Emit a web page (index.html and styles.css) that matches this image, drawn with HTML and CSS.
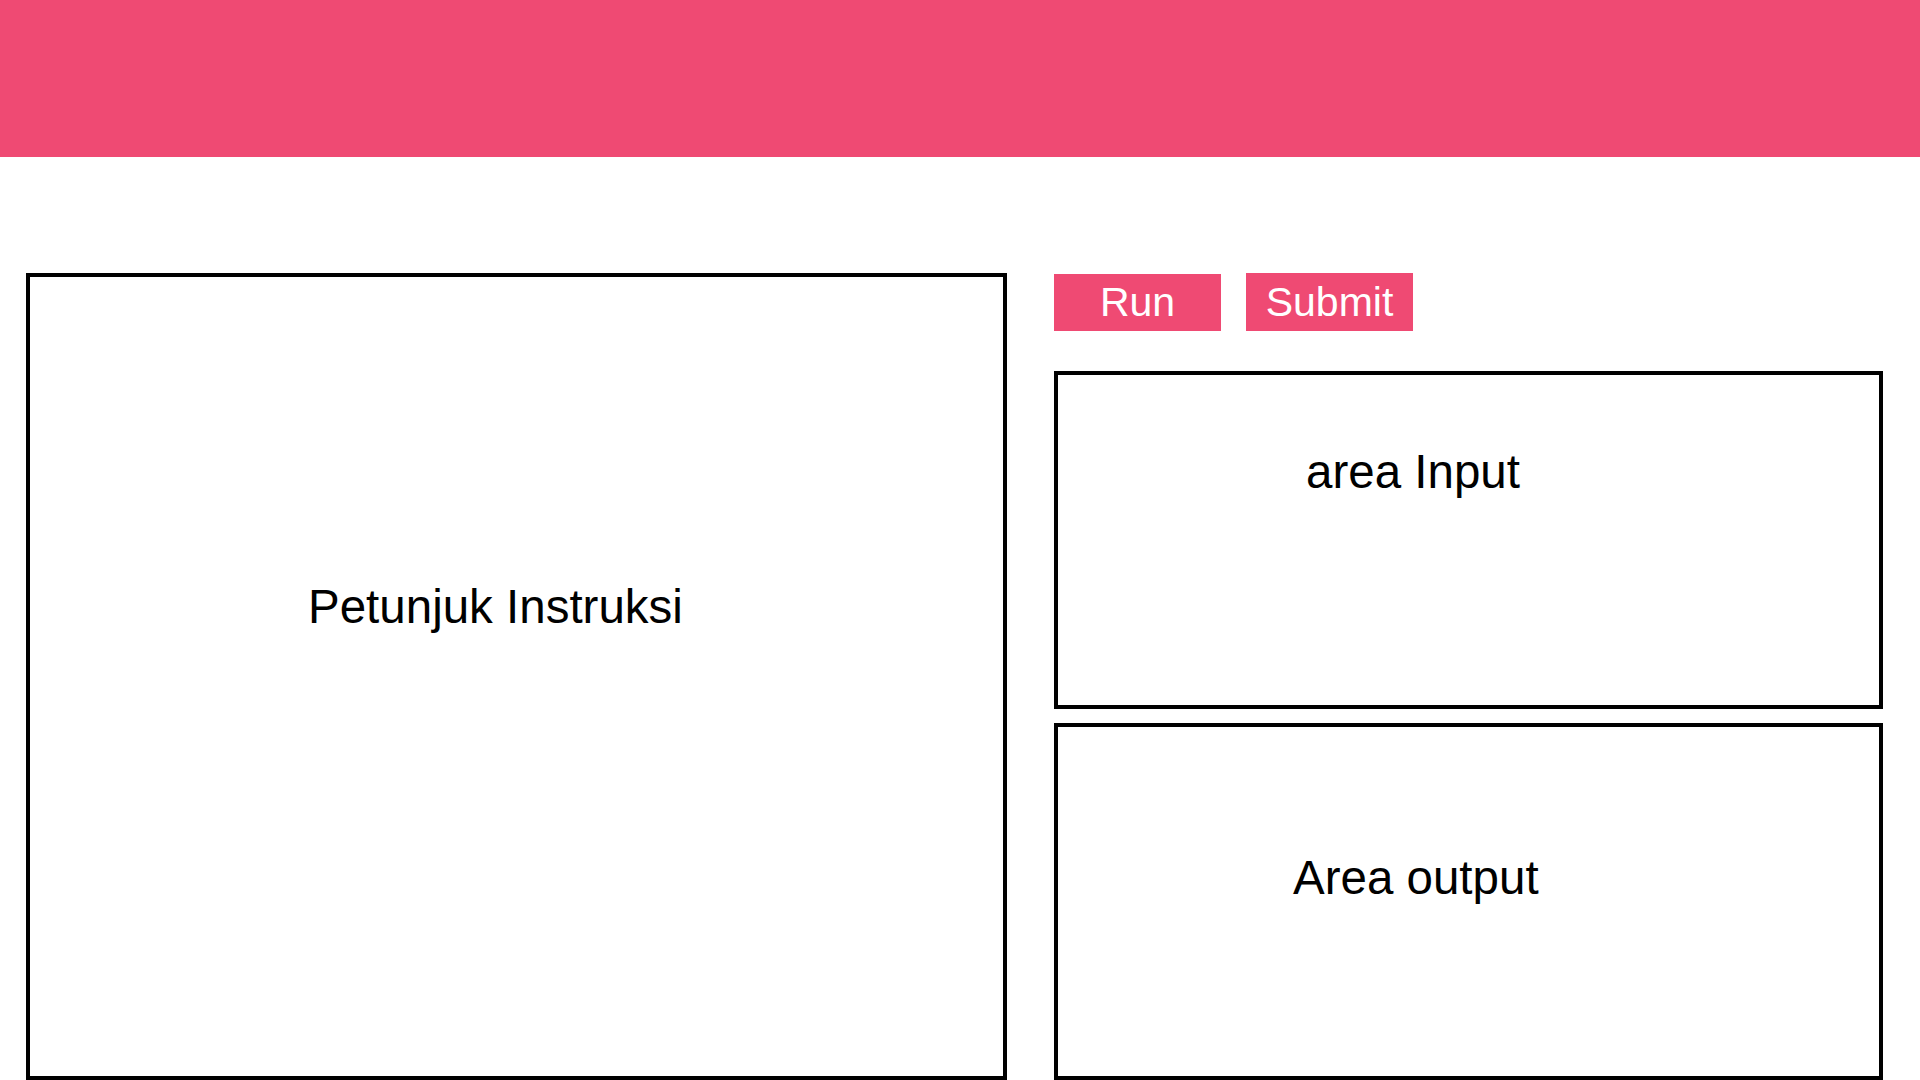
FILE: index.html
```html
<!DOCTYPE html>
<html>
<head>
<meta charset="utf-8">
<link rel="stylesheet" href="styles.css">
</head>
<body>
<header class="topbar"></header>
<main class="main">
  <section class="panel panel-instr"><span class="label">Petunjuk Instruksi</span></section>
  <div class="right">
    <div class="actions">
      <button class="btn btn-run">Run</button>
      <button class="btn btn-submit">Submit</button>
    </div>
    <section class="panel panel-input"><span class="label">area Input</span></section>
    <section class="panel panel-output"><span class="label">Area output</span></section>
  </div>
</main>
</body>
</html>
```
FILE: styles.css
```css
html, body {
  margin: 0;
  padding: 0;
  background: #ffffff;
  font-family: "Liberation Sans", Arial, sans-serif;
  overflow: hidden;
}
.topbar {
  height: 157px;
  background: #ef4a73;
}
.main {
  display: flex;
  align-items: flex-start;
  padding: 116px 0 0 26px;
  gap: 47px;
}
.panel {
  box-sizing: border-box;
  border: 4px solid #000;
  background: #fff;
}
.label {
  display: block;
  font-size: 47.5px;
  line-height: 47.5px;
  color: #000;
  white-space: nowrap;
}
.panel-instr {
  width: 981px;
  height: 807px;
  padding: 306px 0 0 278px;
}
.right {
  display: flex;
  flex-direction: column;
  width: 829px;
}
.actions {
  display: flex;
  align-items: flex-start;
  gap: 25px;
  height: 58px;
  margin-bottom: 40px;
}
.btn {
  border: none;
  margin: 0;
  padding: 0;
  background: #ef4a73;
  color: #fff;
  font-family: "Liberation Sans", Arial, sans-serif;
  font-size: 41px;
  width: 167px;
  display: flex;
  align-items: center;
  justify-content: center;
}
.btn-run {
  height: 57px;
  margin-top: 1px;
}
.btn-submit {
  height: 58px;
}
.panel-input {
  height: 338px;
  padding: 73px 0 0 248px;
}
.panel-output {
  height: 357px;
  margin-top: 14px;
  padding: 127px 0 0 235px;
}
```
